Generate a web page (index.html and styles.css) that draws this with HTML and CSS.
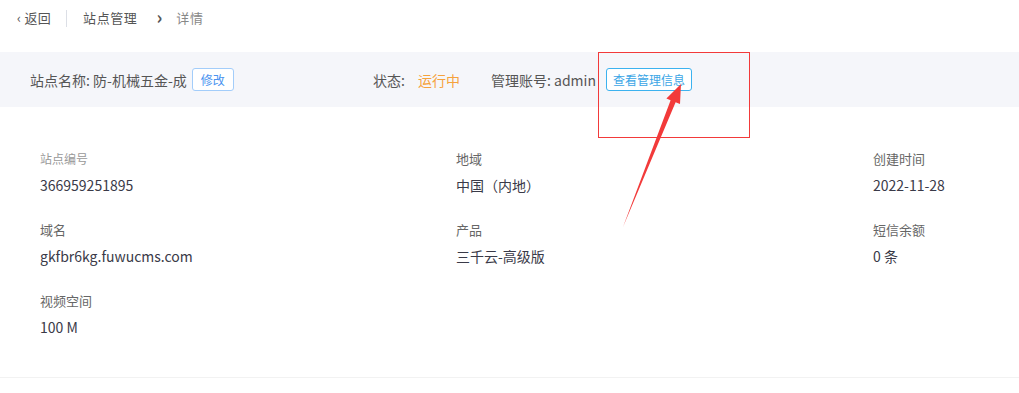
FILE: index.html
```html
<!DOCTYPE html>
<html lang="zh-CN">
    <head>
        <meta charset="UTF-8" />
        <title>站点详情</title>
        <link rel="stylesheet" href="styles.css">
    </head>
    <body>
        <div class="page">
            <div class="crumbs">
                <span class="back">‹ 返回</span>
                <span class="sep"></span>
                <span class="crumb">站点管理</span>
                <span class="arrow">›</span>
                <span class="crumb current">详情</span>
            </div>

            <div class="bar">
                <div class="item name">
                    站点名称: 防-机械五金-成
                    <span class="btn light">修改</span>
                </div>
                <div class="item status">
                    状态:
                    <span class="running">运行中</span>
                </div>
                <div class="item account">
                    管理账号: admin
                    <span class="btn">查看管理信息</span>
                </div>
            </div>

            <div class="info">
                <div class="field">
                    <div class="label light">站点编号</div>
                    <div class="value">366959251895</div>
                </div>
                <div class="field">
                    <div class="label">地域</div>
                    <div class="value">中国（内地）</div>
                </div>
                <div class="field">
                    <div class="label">创建时间</div>
                    <div class="value">2022-11-28</div>
                </div>
                <div class="field">
                    <div class="label">域名</div>
                    <div class="value">gkfbr6kg.fuwucms.com</div>
                </div>
                <div class="field">
                    <div class="label">产品</div>
                    <div class="value">三千云-高级版</div>
                </div>
                <div class="field">
                    <div class="label">短信余额</div>
                    <div class="value">0 条</div>
                </div>
                <div class="field">
                    <div class="label">视频空间</div>
                    <div class="value">100 M</div>
                </div>
            </div>

            <div class="mark"></div>
            <svg class="pointer" width="1019" height="393" viewBox="0 0 1019 393">
                <polygon points="623,227 670.6,100.2 666.4,98.5 681,84 680,104 675.6,102.2" fill="#f23a3a" />
            </svg>
        </div>
    </body>
</html>
```

FILE: styles.css
```css
body {
    margin: 0;
    background: #fff;
    font-family: "Noto Sans CJK SC", "Noto Sans", sans-serif;
    color: #333;
}

.page {
    position: relative;
    height: 393px;
    overflow: hidden;
}

.crumbs {
    height: 52px;
    display: flex;
    align-items: flex-start;
    padding: 9px 0 0 17px;
    box-sizing: border-box;
    font-size: 13px;
    line-height: 18px;
    color: #555;
}

.back {
    color: #555;
    letter-spacing: 0.3px;
}

.sep {
    width: 1px;
    height: 17px;
    background: #dcdfe6;
    margin: 1px 16px 0 15px;
}

.crumb {
    letter-spacing: 0.6px;
}

.arrow {
    font-size: 18px;
    font-weight: bold;
    margin: -2px 14px 0 19px;
    color: #555;
}

.crumb.current {
    color: #888;
}

.bar {
    height: 55px;
    background: #f5f6fa;
    display: flex;
    align-items: center;
    padding-left: 30px;
    font-size: 14px;
    color: #555;
}

.item {
    display: flex;
    align-items: center;
}

.name {
    width: 343px;
}

.status {
    width: 118px;
}

.running {
    color: #f5a23c;
    margin-left: 13px;
}

.btn {
    display: inline-flex;
    align-items: center;
    justify-content: center;
    height: 21px;
    padding: 0 6px;
    margin-left: 10px;
    border: 1px solid #3cb2ef;
    border-radius: 3px;
    background: #fff;
    color: #3ba6e6;
    font-size: 12px;
}

.btn.light {
    margin-left: 5px;
    padding: 0 8px;
    border-color: #a3cdfa;
    color: #4a93f0;
}

.info {
    display: grid;
    grid-template-columns: 416px 417px 1fr;
    align-content: start;
    row-gap: 25px;
    padding: 42px 0 0 40px;
    height: 271px;
    box-sizing: border-box;
    border-bottom: 1px solid #f2f2f2;
}

.label {
    font-size: 13px;
    line-height: 20px;
    color: #666;
}

.label.light {
    font-size: 12px;
    color: #999;
}

.value {
    margin-top: 6px;
    font-size: 14px;
    line-height: 20px;
    color: #3a3a48;
}

.mark {
    position: absolute;
    left: 598px;
    top: 52px;
    width: 150px;
    height: 84px;
    border: 1px solid #f23a3a;
}

.pointer {
    position: absolute;
    left: 0;
    top: 0;
}
```
